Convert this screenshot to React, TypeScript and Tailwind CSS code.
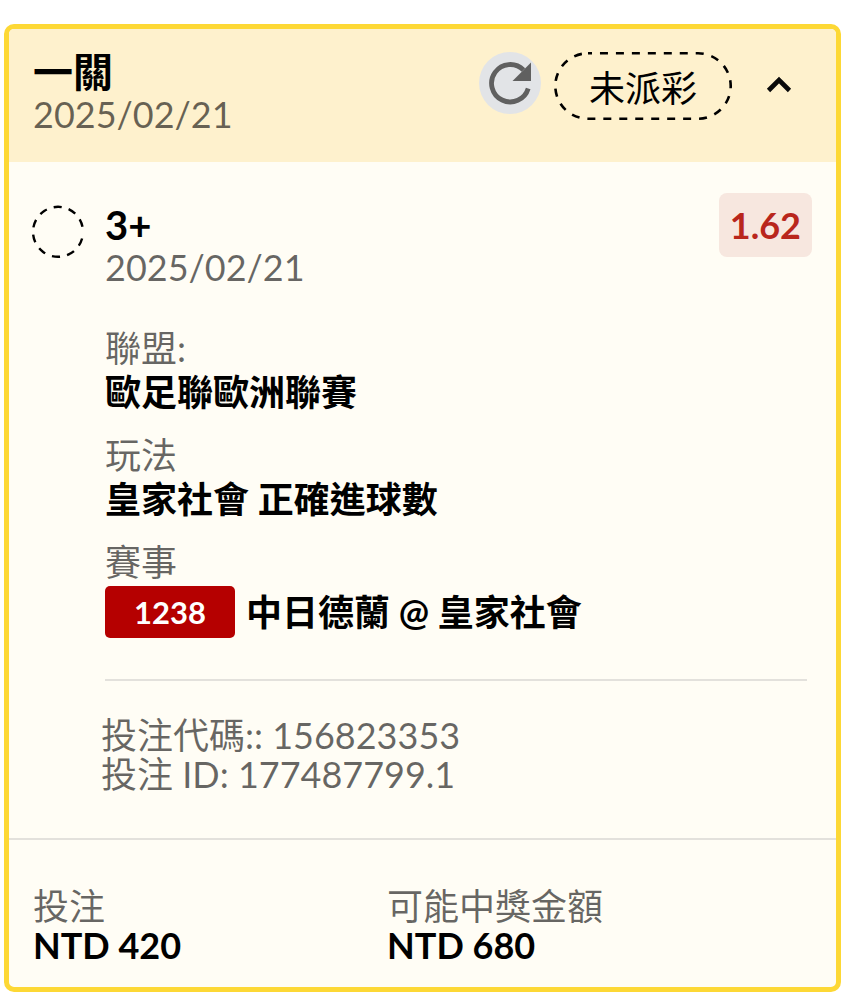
import {useState} from 'react'

const fontStack = "font-['Lato','Noto_Sans_CJK_TC',sans-serif]"

const bet = {
  title: '一關',
  date: '2025/02/21',
  status: '未派彩',
  pick: '3+',
  pickDate: '2025/02/21',
  odds: '1.62',
  league: '歐足聯歐洲聯賽',
  market: '皇家社會 正確進球數',
  matchNo: '1238',
  match: '中日德蘭 @ 皇家社會',
  code: '156823353',
  betId: '177487799.1',
}

const totals = [
  {label: '投注', value: 'NTD 420'},
  {label: '可能中獎金額', value: 'NTD 680'},
]

const RefreshIcon = () => (
  <svg viewBox="0 0 62 62" className="size-full" aria-hidden="true">
    <path d="M49.2 36.5A18.7 18.7 0 1 1 44.5 18" fill="none" stroke="#606060" strokeWidth="4.8" />
    <path d="M52 10.5V29H33.5Z" fill="#606060" />
  </svg>
)

const ChevronUp = () => (
  <svg viewBox="0 0 26 18" className="h-[18px] w-[26px]" aria-hidden="true">
    <path d="M2.5 14.5 13 4 23.5 14.5" fill="none" stroke="#0a0a0a" strokeWidth="4.6" />
  </svg>
)

// 未確定を示す破線の丸
const PendingMark = () => (
  <svg viewBox="0 0 54 54" className="size-[54px] shrink-0" aria-hidden="true">
    <path
      d="M51.1 33.5A25 25 0 1 1 51.5 21.8"
      fill="none"
      stroke="#000"
      strokeWidth="2.4"
      strokeDasharray="8 7.2"
    />
  </svg>
)

const StatusPill = ({children}: {children: string}) => (
  <span className="relative flex h-[68px] w-[178px] items-center justify-center pt-1 text-[36px] leading-[44px]">
    <svg viewBox="0 0 178 68" className="absolute inset-0 size-full" aria-hidden="true">
      <rect
        x="1.3"
        y="1.3"
        width="175.4"
        height="65.4"
        rx="32.7"
        fill="none"
        stroke="#000"
        strokeWidth="2.6"
        strokeDasharray="8 7.96"
        strokeDashoffset="4"
      />
    </svg>
    {children}
  </span>
)

export default function App() {
  const [open, setOpen] = useState(true)

  return (
    <main className={`bg-white pt-6 pr-[15px] pb-2 pl-1 text-[36px] leading-[44px] text-black ${fontStack}`}>
      <article className="overflow-hidden rounded-[10px] border-5 border-[#fdd835] bg-[#fffdf5]">
        {/* ヘッダー */}
        <header className="flex items-start justify-between bg-[#fef1cd] pt-[23px] pr-11 pb-[26px] pl-6">
          <div>
            <h1 className="text-[40px] leading-10 font-bold">{bet.title}</h1>
            <p className="text-black/60">{bet.date}</p>
          </div>
          <div className="flex items-start gap-[13px]">
            <button type="button" aria-label="重新整理" className="size-[62px] rounded-full bg-[#e2e4e7]">
              <RefreshIcon />
            </button>
            <StatusPill>{bet.status}</StatusPill>
            <button
              type="button"
              aria-label="收合"
              aria-expanded={open}
              onClick={() => setOpen(!open)}
              className="ml-[21px] flex h-[66px] items-center"
            >
              <ChevronUp />
            </button>
          </div>
        </header>

        {/* 明細 */}
        {open && (
          <section className="flex gap-5 pt-[43px] pr-6 pb-11 pl-[22px]">
            <PendingMark />
            <div className="min-w-0 flex-1">
              <div className="flex items-start justify-between">
                <div>
                  <h2 className="text-[40px] leading-10 font-bold">{bet.pick}</h2>
                  <p className="text-black/60">{bet.pickDate}</p>
                </div>
                <span className="-mt-3 rounded-lg bg-[#f7e7df] px-[11px] py-[10px] font-bold text-[#b9261c]">
                  {bet.odds}
                </span>
              </div>

              <dl className="mt-[37px] flex flex-col gap-[19px]">
                <div>
                  <dt className="text-black/60">聯盟:</dt>
                  <dd className="font-bold">{bet.league}</dd>
                </div>
                <div>
                  <dt className="text-black/60">玩法</dt>
                  <dd className="font-bold">{bet.market}</dd>
                </div>
                <div>
                  <dt className="text-black/60">賽事</dt>
                  <dd className="mt-0.5 flex items-center gap-[11px] font-bold">
                    <span className="w-[130px] rounded-[5px] bg-[#b50000] py-1 text-center text-[31px] text-white">
                      {bet.matchNo}
                    </span>
                    {bet.match}
                  </dd>
                </div>
              </dl>

              <hr className="mt-[41px] mr-[5px] border-t-2 border-[#e3e1dc]" />

              <div className="mt-[35px] -ml-1 leading-[39px] text-black/60">
                <p>投注代碼:: {bet.code}</p>
                <p>投注 ID: {bet.betId}</p>
              </div>
            </div>
          </section>
        )}

        {/* 合計 */}
        <footer className="border-t-2 border-[#e3e1dc] px-6 pt-[47px] pb-[22px]">
          <dl className="grid grid-cols-[5fr_6fr] leading-[39px]">
            {totals.map(t => (
              <div key={t.label}>
                <dt className="text-black/60">{t.label}</dt>
                <dd className="font-bold">{t.value}</dd>
              </div>
            ))}
          </dl>
        </footer>
      </article>
    </main>
  )
}
